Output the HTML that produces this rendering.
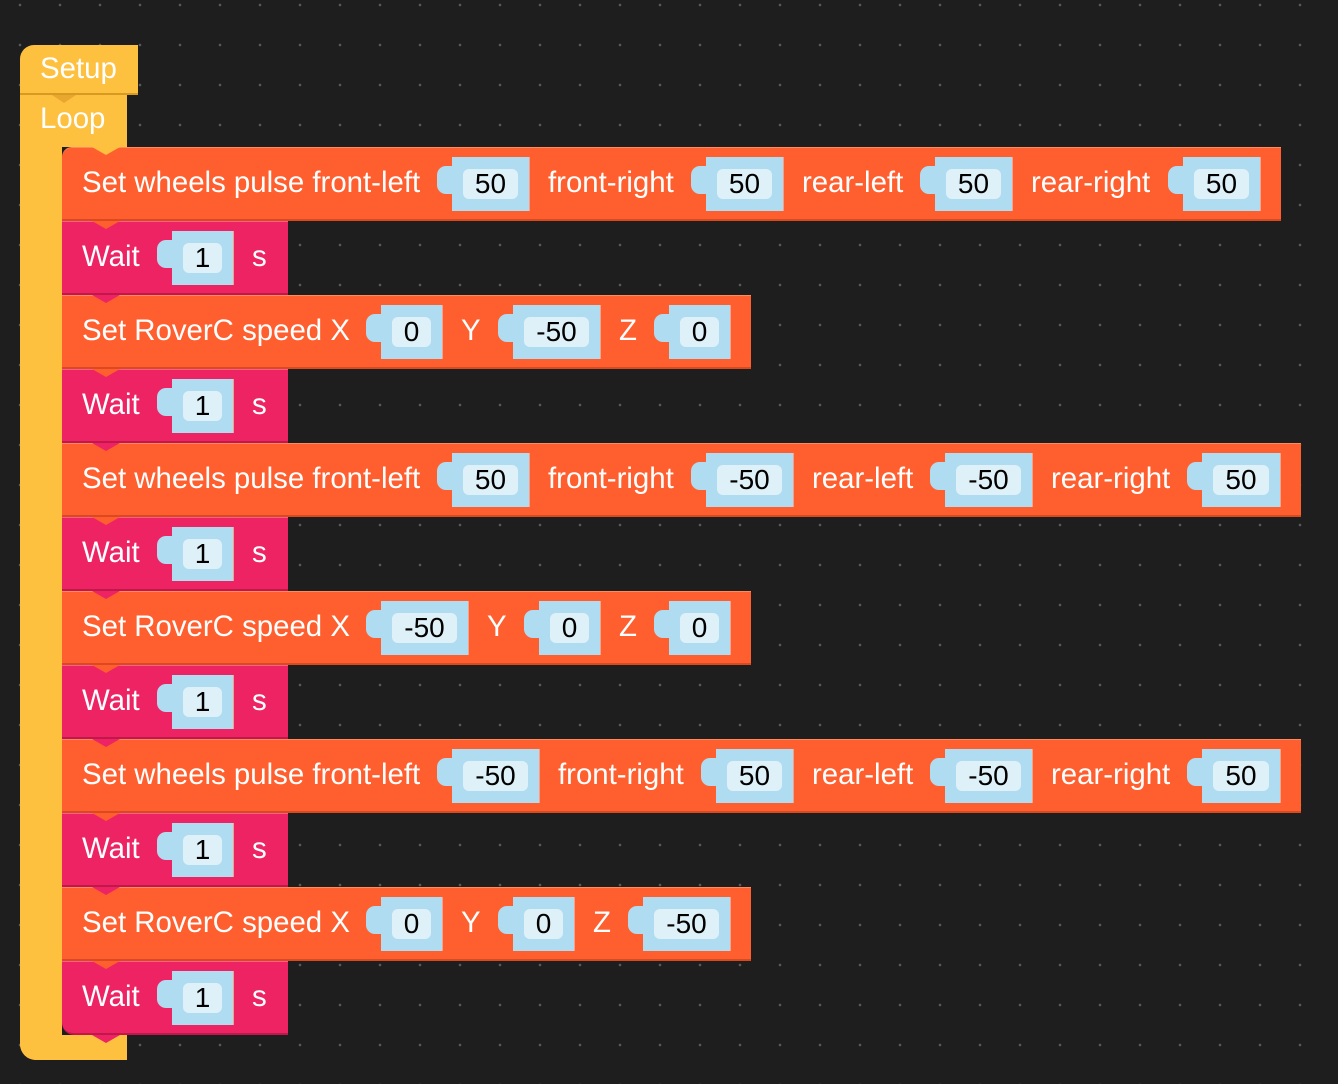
<!DOCTYPE html>
<html><head><meta charset="utf-8"><style>
body{margin:0;width:1338px;height:1084px;overflow:hidden;background-color:#1e1e1e;
background-image:radial-gradient(circle,#5a5a5a 1.1px,transparent 1.5px);background-size:40px 40px;background-position:0px -15px;
font-family:"Liberation Sans",Arial,sans-serif;position:relative}
.a{position:absolute}
.b{position:absolute;left:62px;height:74px;box-sizing:border-box}
.o{background:#ff5f2e;border-top:1px solid #ff8a5e;border-bottom:2px solid #d94a1e}
.w{background:#ee2364;border-top:1px solid #f5608f;border-bottom:2px solid #c0184c}
.t{position:absolute;top:0;line-height:70px;font-size:29.4px;color:#fff;white-space:nowrap}
.r{position:absolute;top:9px;height:54px;background:#afdcf1;border-right:1px solid #f7a08a}
.tab{position:absolute;top:18px;width:18px;height:28px;background:#afdcf1;border-radius:9px 0 0 9px}
.v{position:absolute;top:12px;left:11px;right:11px;height:30px;background:#dff1f8;border-radius:6px;color:#000;font-size:28px;line-height:30px;text-align:center}
.n{position:absolute;top:-1px;left:30px;width:0;height:0;border-left:14px solid transparent;border-right:14px solid transparent}
</style></head><body>
<div class="a" style="left:20px;top:45px;width:118px;height:50px;background:#fec03f;border-radius:14px 0 0 0;border-bottom:2px solid #d89a20;box-sizing:border-box"></div>
<div class="a" style="left:40px;top:52px;font-size:29.4px;color:#fff">Setup</div>
<div class="a" style="left:20px;top:95px;width:107px;height:52px;background:#fec03f"></div>
<div class="a" style="left:20px;top:95px;width:42px;height:965px;background:#fec03f;border-radius:0 0 0 16px"></div>
<div class="a" style="left:20px;top:1035px;width:107px;height:25px;background:#fec03f;border-radius:0 0 0 16px"></div>
<div class="a" style="left:40px;top:102px;font-size:29.4px;color:#fff">Loop</div>
<div class="a" style="left:52px;top:95px;width:0;height:0;border-left:12px solid transparent;border-right:12px solid transparent;border-top:8px solid #e8a830"></div>

<div class="b o" style="top:147px;width:1219px;border-radius:10px 0 0 0">
<div class="n" style="border-top:8px solid #fec03f"></div>
<div class="t" style="left:20px">Set wheels pulse front-left</div>
<div class="tab" style="left:375px"></div><div class="r" style="left:390px;width:77px"><div class="v">50</div></div>
<div class="t" style="left:486px">front-right</div>
<div class="tab" style="left:629px"></div><div class="r" style="left:644px;width:77px"><div class="v">50</div></div>
<div class="t" style="left:740px">rear-left</div>
<div class="tab" style="left:858px"></div><div class="r" style="left:873px;width:77px"><div class="v">50</div></div>
<div class="t" style="left:969px">rear-right</div>
<div class="tab" style="left:1106px"></div><div class="r" style="left:1121px;width:77px"><div class="v">50</div></div>
</div>
<div class="b w" style="top:221px;width:226px"><div class="n" style="border-top:8px solid #ff5f2e"></div>
<div class="t" style="left:20px">Wait</div><div class="tab" style="left:95px"></div><div class="r" style="left:110px;width:61px"><div class="v">1</div></div><div class="t" style="left:190px">s</div></div>

<div class="b o" style="top:295px;width:689px"><div class="n" style="border-top:8px solid #ee2364"></div>
<div class="t" style="left:20px">Set RoverC speed X</div>
<div class="tab" style="left:304px"></div><div class="r" style="left:319px;width:61px"><div class="v">0</div></div>
<div class="t" style="left:399px">Y</div>
<div class="tab" style="left:436px"></div><div class="r" style="left:451px;width:87px"><div class="v">-50</div></div>
<div class="t" style="left:557px">Z</div>
<div class="tab" style="left:592px"></div><div class="r" style="left:607px;width:61px"><div class="v">0</div></div>
</div>
<div class="b w" style="top:369px;width:226px"><div class="n" style="border-top:8px solid #ff5f2e"></div>
<div class="t" style="left:20px">Wait</div><div class="tab" style="left:95px"></div><div class="r" style="left:110px;width:61px"><div class="v">1</div></div><div class="t" style="left:190px">s</div></div>

<div class="b o" style="top:443px;width:1239px"><div class="n" style="border-top:8px solid #ee2364"></div>
<div class="t" style="left:20px">Set wheels pulse front-left</div>
<div class="tab" style="left:375px"></div><div class="r" style="left:390px;width:77px"><div class="v">50</div></div>
<div class="t" style="left:486px">front-right</div>
<div class="tab" style="left:629px"></div><div class="r" style="left:644px;width:87px"><div class="v">-50</div></div>
<div class="t" style="left:750px">rear-left</div>
<div class="tab" style="left:868px"></div><div class="r" style="left:883px;width:87px"><div class="v">-50</div></div>
<div class="t" style="left:989px">rear-right</div>
<div class="tab" style="left:1125px"></div><div class="r" style="left:1140px;width:78px"><div class="v">50</div></div>
</div>
<div class="b w" style="top:517px;width:226px"><div class="n" style="border-top:8px solid #ff5f2e"></div>
<div class="t" style="left:20px">Wait</div><div class="tab" style="left:95px"></div><div class="r" style="left:110px;width:61px"><div class="v">1</div></div><div class="t" style="left:190px">s</div></div>

<div class="b o" style="top:591px;width:689px"><div class="n" style="border-top:8px solid #ee2364"></div>
<div class="t" style="left:20px">Set RoverC speed X</div>
<div class="tab" style="left:304px"></div><div class="r" style="left:319px;width:87px"><div class="v">-50</div></div>
<div class="t" style="left:425px">Y</div>
<div class="tab" style="left:462px"></div><div class="r" style="left:477px;width:61px"><div class="v">0</div></div>
<div class="t" style="left:557px">Z</div>
<div class="tab" style="left:592px"></div><div class="r" style="left:607px;width:61px"><div class="v">0</div></div>
</div>
<div class="b w" style="top:665px;width:226px"><div class="n" style="border-top:8px solid #ff5f2e"></div>
<div class="t" style="left:20px">Wait</div><div class="tab" style="left:95px"></div><div class="r" style="left:110px;width:61px"><div class="v">1</div></div><div class="t" style="left:190px">s</div></div>

<div class="b o" style="top:739px;width:1239px"><div class="n" style="border-top:8px solid #ee2364"></div>
<div class="t" style="left:20px">Set wheels pulse front-left</div>
<div class="tab" style="left:375px"></div><div class="r" style="left:390px;width:87px"><div class="v">-50</div></div>
<div class="t" style="left:496px">front-right</div>
<div class="tab" style="left:639px"></div><div class="r" style="left:654px;width:77px"><div class="v">50</div></div>
<div class="t" style="left:750px">rear-left</div>
<div class="tab" style="left:868px"></div><div class="r" style="left:883px;width:87px"><div class="v">-50</div></div>
<div class="t" style="left:989px">rear-right</div>
<div class="tab" style="left:1125px"></div><div class="r" style="left:1140px;width:78px"><div class="v">50</div></div>
</div>
<div class="b w" style="top:813px;width:226px"><div class="n" style="border-top:8px solid #ff5f2e"></div>
<div class="t" style="left:20px">Wait</div><div class="tab" style="left:95px"></div><div class="r" style="left:110px;width:61px"><div class="v">1</div></div><div class="t" style="left:190px">s</div></div>

<div class="b o" style="top:887px;width:689px"><div class="n" style="border-top:8px solid #ee2364"></div>
<div class="t" style="left:20px">Set RoverC speed X</div>
<div class="tab" style="left:304px"></div><div class="r" style="left:319px;width:61px"><div class="v">0</div></div>
<div class="t" style="left:399px">Y</div>
<div class="tab" style="left:436px"></div><div class="r" style="left:451px;width:61px"><div class="v">0</div></div>
<div class="t" style="left:531px">Z</div>
<div class="tab" style="left:566px"></div><div class="r" style="left:581px;width:87px"><div class="v">-50</div></div>
</div>
<div class="b w" style="top:961px;width:226px;border-radius:0 0 0 12px"><div class="n" style="border-top:8px solid #ff5f2e"></div>
<div class="t" style="left:20px">Wait</div><div class="tab" style="left:95px"></div><div class="r" style="left:110px;width:61px"><div class="v">1</div></div><div class="t" style="left:190px">s</div></div>
<div class="a" style="left:92px;top:1035px;width:0;height:0;border-left:14px solid transparent;border-right:14px solid transparent;border-top:8px solid #ee2364"></div>
</body></html>
